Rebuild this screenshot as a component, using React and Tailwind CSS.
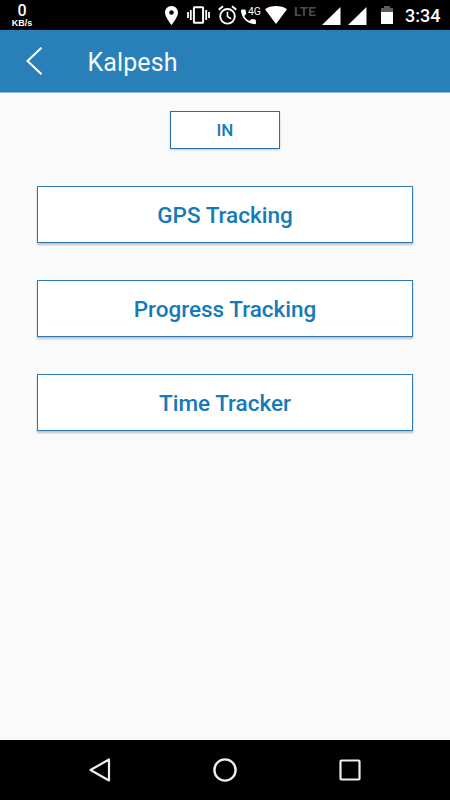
import { useState } from 'react';

const menuItems = ['GPS Tracking', 'Progress Tracking', 'Time Tracker'];

function SignalIcon({ className }) {
  return (
    <svg className={className} width="19" height="18" viewBox="0 0 19 18" fill="#fff">
      <path d="M0 18 18.5 0v18z" />
    </svg>
  );
}

function StatusBar() {
  return (
    <div className="h-[30px] bg-black text-white flex items-start">
      {/* Network speed */}
      <div className="w-[44px] pt-[3px] flex flex-col items-center">
        <span className="text-[16px] leading-[16px] font-medium">0</span>
        <span className="text-[9px] leading-[8px] font-bold font-['Liberation_Sans',sans-serif]">KB/s</span>
      </div>

      {/* Location */}
      <svg className="ml-[121px] mt-[6px]" width="13" height="19" viewBox="0 0 13 19">
        <path
          fill="#fff"
          fillRule="evenodd"
          d="M6.5 0C2.9 0 0 2.9 0 6.5 0 11.2 6.5 19 6.5 19S13 11.2 13 6.5C13 2.9 10.1 0 6.5 0zm0 4.2a2.3 2.3 0 1 1 0 4.6 2.3 2.3 0 0 1 0-4.6z"
        />
      </svg>

      {/* Vibrate */}
      <svg className="ml-[9px] mt-[6px]" width="23" height="18" viewBox="0 0 23 18" fill="none" stroke="#fff">
        <rect x="6.9" y="1.2" width="9.2" height="15.6" rx="0.6" strokeWidth="2" />
        <path d="M1 6v6M3.8 4v10M19.2 4v10M22 6v6" strokeWidth="1.8" />
      </svg>

      {/* Alarm */}
      <svg className="ml-[8px] mt-[5px]" width="19" height="20" viewBox="0 0 19 20" fill="none" stroke="#fff">
        <circle cx="9.5" cy="11.3" r="7.3" strokeWidth="1.9" />
        <path d="M9.5 6.8v4.8l3.6 2.2" strokeWidth="1.6" />
        <path d="M.7 4.8 5 1.2M18.3 4.8 14 1.2" strokeWidth="1.9" />
      </svg>

      {/* Call over 4G */}
      <svg className="ml-[4px] mt-[5px]" width="20" height="20" viewBox="0 0 20 20" fill="#fff">
        <path d="M.9 4.5h3c.5 0 .8.3.8.8 0 1.100.2 2.100.5 3 .1.300 0 .6-.2.900L3.200 11c1.300 2.300 2.900 3.900 5.200 5.100l1.800-1.800c.2-.2.600-.3.900-.2 1 .3 2 .5 3 .5.5 0 .8.3.8.8v3c0 .5-.3.800-.8.800C6.400 19.200 0 12.800 0 5.300c0-.5.400-.8.900-.8z" />
        <text x="7" y="10" fontSize="10.5" textLength="13" lengthAdjust="spacingAndGlyphs">
          4G
        </text>
      </svg>

      {/* Wifi */}
      <svg className="ml-[4px] mt-[6px]" width="22" height="18" viewBox="0 0 22 18" fill="#fff">
        <path d="M0 3.2C3 1.1 6.8 0 11 0s8 1.1 11 3.2L11 18z" />
      </svg>

      <span className="ml-[7px] mt-[4px] w-[22px] text-[13.5px] leading-[15px] font-bold text-[#4c4c4c]">
        LTE
      </span>

      <SignalIcon className="ml-[6px] mt-[7px]" />
      <SignalIcon className="ml-[7px] mt-[7px]" />

      {/* Battery */}
      <svg className="ml-[14px] mt-[6px]" width="12" height="18" viewBox="0 0 12 18">
        <path fill="#5c5c5c" d="M0 2h3V0h6v2h3v4H0z" />
        <path fill="#fff" d="M0 6h12v12H0z" />
      </svg>

      <span className="ml-[12px] mt-[5px] text-[18px] leading-[21px] font-medium">3:34</span>
    </div>
  );
}

function Header({ title }) {
  return (
    <header className="h-[63px] bg-[#2980b9] border-b border-[#98bdd8] shadow-[inset_0_-1px_0_#2275ac] flex items-center">
      <button type="button" aria-label="Back" className="ml-[26px]">
        <svg width="17" height="28" viewBox="0 0 17 28" fill="none" stroke="#fff" strokeWidth="2">
          <path d="M15.5.7 1.5 14l14 13.3" />
        </svg>
      </button>
      <h1 className="ml-[44.5px] pt-[4px] text-[25px] leading-[30px] tracking-[0.1px] text-[#f5faff]">{title}</h1>
    </header>
  );
}

function NavigationBar() {
  return (
    <nav className="h-[60px] bg-black flex items-center justify-between px-[88px]">
      <svg width="24" height="24" viewBox="0 0 24 24" fill="none" stroke="#eee" strokeWidth="2.2" strokeLinejoin="round">
        <path d="M21 1.5v21L2.5 12z" />
      </svg>
      <svg width="24" height="24" viewBox="0 0 24 24" fill="none" stroke="#eee" strokeWidth="2.4">
        <circle cx="12" cy="12" r="10.6" />
      </svg>
      <svg width="24" height="24" viewBox="0 0 24 24" fill="none" stroke="#eee" strokeWidth="2.2">
        <rect x="2.5" y="2.5" width="19" height="19" rx="1" />
      </svg>
    </nav>
  );
}

export default function App() {
  const [checkedIn, setCheckedIn] = useState(false);

  return (
    <div className="w-[450px] h-[800px] flex flex-col bg-[#fafafa] font-[Roboto,sans-serif] overflow-hidden">
      <StatusBar />
      <Header title="Kalpesh" />

      <main className="flex-1 flex flex-col items-center pt-[18px]">
        <button
          type="button"
          onClick={() => setCheckedIn(!checkedIn)}
          className="w-[110px] h-[38px] pt-[2px] bg-white border border-[#226fae] shadow-[0_1px_2px_rgba(0,0,0,0.2)] text-[17px] font-medium text-[#147ab8]"
        >
          {checkedIn ? 'OUT' : 'IN'}
        </button>

        <div className="w-full px-[37px] mt-[37px] flex flex-col gap-[37px]">
          {menuItems.map((item) => (
            <button
              key={item}
              type="button"
              className="h-[57px] pt-[2px] bg-white border border-[#3078b2] shadow-[0_2px_2px_rgba(0,0,0,0.24)] text-[22.5px] font-medium text-[#147ab8]"
            >
              {item}
            </button>
          ))}
        </div>
      </main>

      <NavigationBar />
    </div>
  );
}
